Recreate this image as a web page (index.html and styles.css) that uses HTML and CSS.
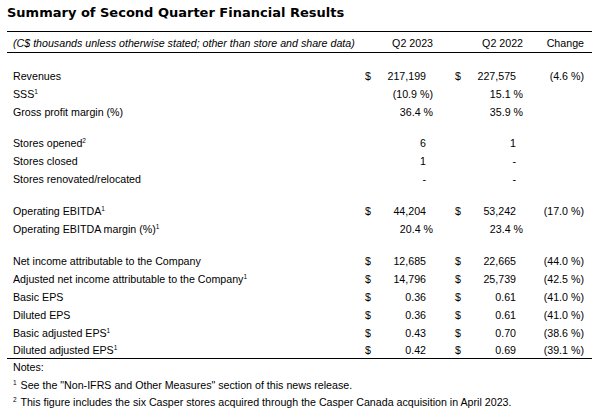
FILE: index.html
```html
<!DOCTYPE html>
<html>
<head>
<meta charset="utf-8">
<link rel="stylesheet" href="styles.css">
</head>
<body>
<div class="title">Summary of Second Quarter Financial Results</div>
<table class="fin">
  <colgroup>
    <col class="c-label"><col class="c-cur1"><col class="c-val"><col class="c-cur2"><col class="c-val"><col class="c-chg">
  </colgroup>
  <thead>
    <tr>
      <th class="lbl hdr-note">(C$ thousands unless otherwise stated; other than store and share data)</th>
      <th></th><th class="v">Q2 2023</th>
      <th></th><th class="v">Q2 2022</th>
      <th class="chg">Change</th>
    </tr>
  </thead>
  <tbody>
    <tr class="gap g1"><td colspan="6"></td></tr>
    <tr><td class="lbl">Revenues</td><td class="cur">$</td><td class="v n">217,199</td><td class="cur cur2">$</td><td class="v n">227,575</td><td class="chg">(4.6 %)</td></tr>
    <tr><td class="lbl">SSS<sup>1</sup></td><td></td><td class="v">(10.9 %)</td><td></td><td class="v">15.1 %</td><td></td></tr>
    <tr><td class="lbl">Gross profit margin (%)</td><td></td><td class="v">36.4 %</td><td></td><td class="v">35.9 %</td><td></td></tr>
    <tr class="gap g2"><td colspan="6"></td></tr>
    <tr><td class="lbl">Stores opened<sup>2</sup></td><td></td><td class="v n">6</td><td></td><td class="v n">1</td><td></td></tr>
    <tr><td class="lbl">Stores closed</td><td></td><td class="v n">1</td><td></td><td class="v n">-</td><td></td></tr>
    <tr><td class="lbl">Stores renovated/relocated</td><td></td><td class="v n">-</td><td></td><td class="v n">-</td><td></td></tr>
    <tr class="gap g3"><td colspan="6"></td></tr>
    <tr><td class="lbl">Operating EBITDA<sup>1</sup></td><td class="cur">$</td><td class="v n">44,204</td><td class="cur cur2">$</td><td class="v n">53,242</td><td class="chg">(17.0 %)</td></tr>
    <tr><td class="lbl">Operating EBITDA margin (%)<sup>1</sup></td><td></td><td class="v">20.4 %</td><td></td><td class="v">23.4 %</td><td></td></tr>
    <tr class="gap g3"><td colspan="6"></td></tr>
    <tr><td class="lbl">Net income attributable to the Company</td><td class="cur">$</td><td class="v n">12,685</td><td class="cur cur2">$</td><td class="v n">22,665</td><td class="chg">(44.0 %)</td></tr>
    <tr><td class="lbl">Adjusted net income attributable to the Company<sup>1</sup></td><td class="cur">$</td><td class="v n">14,796</td><td class="cur cur2">$</td><td class="v n">25,739</td><td class="chg">(42.5 %)</td></tr>
    <tr><td class="lbl">Basic EPS</td><td class="cur">$</td><td class="v n">0.36</td><td class="cur cur2">$</td><td class="v n">0.61</td><td class="chg">(41.0 %)</td></tr>
    <tr><td class="lbl">Diluted EPS</td><td class="cur">$</td><td class="v n">0.36</td><td class="cur cur2">$</td><td class="v n">0.61</td><td class="chg">(41.0 %)</td></tr>
    <tr><td class="lbl">Basic adjusted EPS<sup>1</sup></td><td class="cur">$</td><td class="v n">0.43</td><td class="cur cur2">$</td><td class="v n">0.70</td><td class="chg">(38.6 %)</td></tr>
    <tr class="last"><td class="lbl">Diluted adjusted EPS<sup>1</sup></td><td class="cur">$</td><td class="v n">0.42</td><td class="cur cur2">$</td><td class="v n">0.69</td><td class="chg">(39.1 %)</td></tr>
  </tbody>
</table>
<div class="notes">
  <div class="note">Notes:</div>
  <div class="note"><sup>1</sup> See the "Non-IFRS and Other Measures" section of this news release.</div>
  <div class="note"><sup>2</sup> This figure includes the six Casper stores acquired through the Casper Canada acquisition in April 2023.</div>
</div>
</body>
</html>
```

FILE: styles.css
```css
html, body {
  margin: 0;
  padding: 0;
  background: #fff;
}
body {
  padding: 4px 7px 0 7px;
  color: #000;
  font-family: "Liberation Sans", Arial, sans-serif;
  font-size: 10.67px;
}
.title {
  font-family: "DejaVu Sans", Verdana, sans-serif;
  font-weight: bold;
  font-size: 13px;
  line-height: 18px;
  margin-bottom: 9px;
}
.fin {
  width: 585px;
  border-collapse: collapse;
  table-layout: fixed;
}
.c-label { width: 353px; }
.c-cur1 { width: 15px; }
.c-cur2 { width: 32px; }
.c-val { width: 58px; }
.c-chg { width: 69px; }
.fin th, .fin td {
  padding: 0;
  height: 18px;
  line-height: 18px;
  font-weight: normal;
  white-space: nowrap;
  vertical-align: middle;
}
.fin thead th {
  border-top: 1px solid #000;
  border-bottom: 1px solid #000;
  padding-top: 2px;
  height: 16px;
}
.fin .lbl {
  text-align: left;
  padding-left: 6px;
}
.fin .hdr-note {
  font-style: italic;
}
.fin .cur {
  text-align: left;
  padding-left: 5px;
}
.fin .cur2 {
  padding-left: 22px;
}
.fin .v {
  text-align: right;
}
.fin .n {
  padding-right: 7px;
}
.fin .chg {
  text-align: right;
  padding-right: 8px;
}
.fin tr.gap td { height: 0; line-height: 0; }
.fin tr.g1 td { height: 14px; }
.fin tr.g2 td { height: 13px; }
.fin tr.g3 td { height: 14px; }
.fin tr.last td {
  border-bottom: 1px solid #000;
  height: 16px;
  line-height: 16px;
}
sup {
  font-size: 6.5px;
  line-height: 0;
  vertical-align: 4px;
}
.notes {
  padding-left: 6px;
}
.note {
  line-height: 17.5px;
}
.note sup {
  padding-right: 1px;
}
```
